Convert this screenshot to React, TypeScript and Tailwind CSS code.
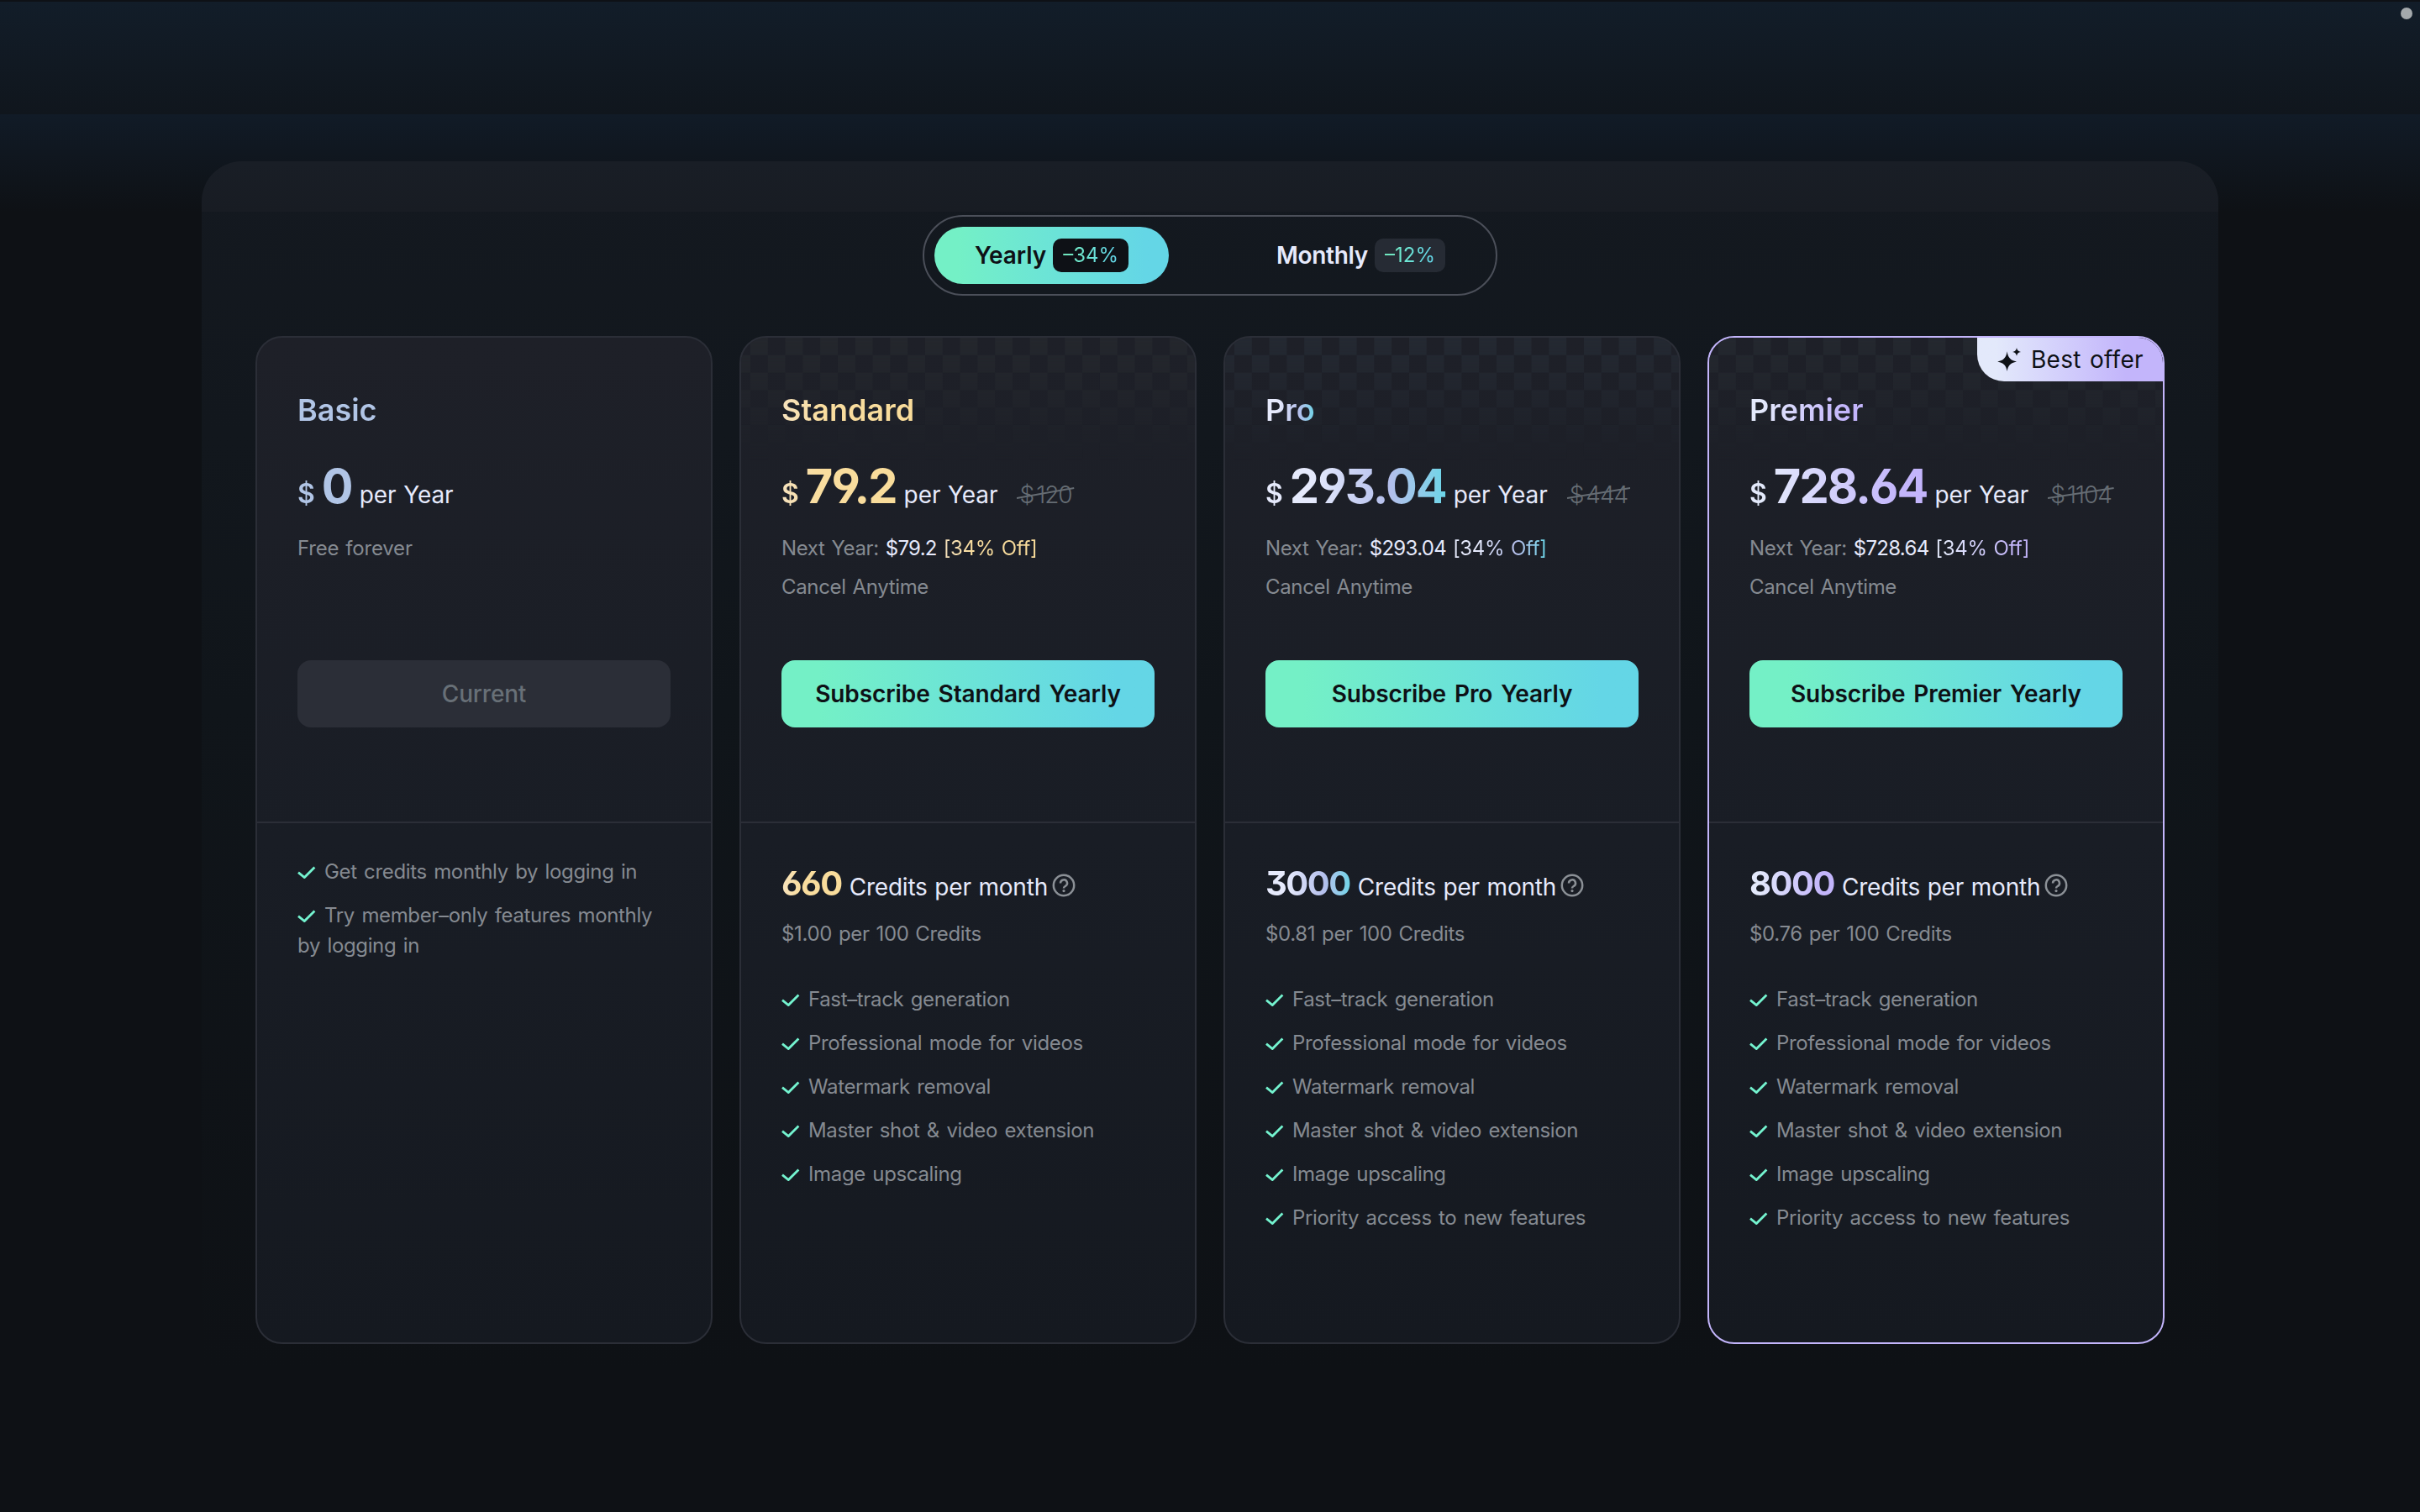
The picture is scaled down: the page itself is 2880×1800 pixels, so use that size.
import { clsx } from "clsx";

interface Plan {
  name: string;
  price: string;
  oldPrice?: string;
  gradient: string;
  pattern?: string;
  credits?: string;
  unitPrice?: string;
  features: string[];
  best?: boolean;
}

const PLANS: Plan[] = [
  {
    name: "Basic",
    price: "0",
    gradient: "from-[#b1c5e6] to-[#b1c5e6]",
    features: ["Get credits monthly by logging in", "Try member–only features monthly by logging in"],
  },
  {
    name: "Standard",
    price: "79.2",
    oldPrice: "120",
    gradient: "from-[#f6e2bd] via-[#f9dd9f] via-30% to-[#f9dc9a]",
    pattern: "text-[#24272d]",
    credits: "660",
    unitPrice: "$1.00",
    features: [
      "Fast–track generation",
      "Professional mode for videos",
      "Watermark removal",
      "Master shot & video extension",
      "Image upscaling",
    ],
  },
  {
    name: "Pro",
    price: "293.04",
    oldPrice: "444",
    gradient: "from-[#e6eafc] from-25% via-[#b4bfec] via-68% to-[#66d6e8]",
    pattern: "text-[#242932]",
    credits: "3000",
    unitPrice: "$0.81",
    features: [
      "Fast–track generation",
      "Professional mode for videos",
      "Watermark removal",
      "Master shot & video extension",
      "Image upscaling",
      "Priority access to new features",
    ],
  },
  {
    name: "Premier",
    price: "728.64",
    oldPrice: "1104",
    gradient: "from-[#e3e9fb] from-10% to-[#c3b5fb] to-85%",
    pattern: "text-[#24282f]",
    credits: "8000",
    unitPrice: "$0.76",
    best: true,
    features: [
      "Fast–track generation",
      "Professional mode for videos",
      "Watermark removal",
      "Master shot & video extension",
      "Image upscaling",
      "Priority access to new features",
    ],
  },
];

const ACCENT = "bg-linear-to-r from-[#74f0c6] from-10% to-[#64d6e6] to-90%";

function CheckIcon() {
  return (
    <svg width="22" height="15" viewBox="0 0 22 15" fill="none" className="mr-2.5 inline-block align-baseline">
      <path d="M1 7.6 8.3 13.6 20.4 1.4" stroke="#74f3cf" strokeWidth="2.8" />
    </svg>
  );
}

function HelpIcon() {
  return (
    <svg width="28" height="28" viewBox="0 0 28 28" fill="none" className="mt-1 ml-[5px]" stroke="#8b9096" strokeWidth="2.5">
      <circle cx="14" cy="14" r="12.2" />
      <path d="M10 11.4a4 4 0 1 1 6 3.4c-1.3.8-2 1.3-2 2.4v.4" />
      <circle cx="14" cy="20.6" r="1.6" fill="#8b9096" stroke="none" />
    </svg>
  );
}

function SparkleIcon() {
  return (
    <svg width="28" height="28" viewBox="0 0 28 28" fill="#0e1116">
      <path d="M11.6 4.2c1.2 7.6 3.8 10.6 11.4 12.3-7.6 1.7-10.2 4.6-11.4 11.5C10.4 21.1 7.8 18.2.2 16.5 7.8 14.8 10.4 11.8 11.600 4.200Z" />
      <path d="M23 0c.6 3 1.7 4.3 5 4.900-3.300.6-4.400 1.900-5 4.900-.6-3-1.700-4.300-5-4.900 3.300-.6 4.400-1.900 5-4.900Z" />
    </svg>
  );
}

function BillingToggle() {
  return (
    <div className="relative mx-auto flex h-24 w-[684px] items-center justify-between rounded-full border-2 border-[#4b4f59] px-3 text-[28px] font-semibold tracking-[-0.3px]">
      <button
        className={clsx("flex h-[68px] w-[279px] items-center gap-2 rounded-full pl-12 tracking-[-0.1px] text-[#0e1116]", ACCENT)}
      >
        Yearly
        <span className="flex h-10 w-[90px] items-center justify-center rounded-[10px] bg-[#0e1116] text-2xl font-normal tracking-normal">
          <span className={clsx("bg-clip-text text-transparent", ACCENT)}>–34%</span>
        </span>
      </button>
      <button className="flex h-[68px] items-center gap-2 px-12 text-[#e6eafc]">
        Monthly
        <span className="flex h-10 w-[84px] items-center justify-center rounded-[10px] bg-[#262b34] text-2xl font-normal tracking-normal">
          <span className={clsx("bg-clip-text text-transparent", ACCENT)}>–12%</span>
        </span>
      </button>
    </div>
  );
}

function PlanCard({ plan }: { plan: Plan }) {
  const gradientText = clsx("bg-linear-to-r bg-clip-text text-transparent", plan.gradient);

  return (
    <div
      className={clsx(
        "relative h-[1200px] w-[544px] overflow-hidden rounded-[32px] border-2 bg-linear-to-b from-[#1e2028] via-[#191d25] via-50% to-[#151920]",
        plan.best ? "border-[#c3b5fb]" : "border-[#2b2e37]"
      )}
    >
      {plan.pattern && (
        <div
          className={clsx(
            "absolute inset-x-0 top-0 h-[146px] bg-[repeating-conic-gradient(currentColor_0_25%,transparent_0_50%)] bg-[length:41.6px_41.6px] bg-[position:-9.8px_0] mask-b-from-0% mask-b-to-100%",
            plan.pattern
          )}
        />
      )}
      {plan.best && (
        <div className="absolute top-0 right-0 flex h-[52px] w-[221px] items-center gap-3 rounded-bl-[32px] bg-linear-to-r from-[#e3e9fb] from-10% to-[#c3b5fb] to-80% pl-6 text-[28px] tracking-[0.3px] text-[#0e1116] [word-spacing:2px]">
          <SparkleIcon />
          Best offer
        </div>
      )}

      <div className="relative h-[578px] border-b-2 border-[#2b2e37] px-12 pt-16">
        <h2 className="text-[36px] leading-[44px] font-semibold">
          <span className={gradientText}>{plan.name}</span>
        </h2>
        <div className="mt-[34px] flex h-[68px] items-baseline whitespace-nowrap">
          <div className={clsx("flex items-baseline gap-2", gradientText)}>
            <span className="text-[32px] font-semibold">$</span>
            <span className="pr-0.5 text-[56px] leading-[70px] font-bold tracking-[-1.9px] [font-feature-settings:'cv03','cv04','cv09']">
              {plan.price}
            </span>
          </div>
          <span className="ml-[7px] text-[28px] tracking-[-0.1px] text-[#e6eafc] [word-spacing:1px]">per Year</span>
          {plan.oldPrice && (
            <span className="relative ml-[26px] text-[28px] font-light tracking-[-1px] text-[#656c73]">
              <span className="mr-[3px]">$</span>
              {plan.oldPrice}
              <svg
                className="absolute top-[12px] -left-[3px] h-3.5 w-[calc(100%+6px)]"
                viewBox="0 0 70 14"
                preserveAspectRatio="none"
                stroke="#656c73"
                strokeWidth="2"
              >
                <path d="M0 13 70 1" />
              </svg>
            </span>
          )}
        </div>
        <div className="mt-[23px] flex h-[82px] flex-col justify-between text-2xl leading-[36px] tracking-[-0.35px] text-[#858a91] [word-spacing:1.5px]">
          {plan.oldPrice ? (
            <>
              <p>
                Next Year: <span className="tracking-[-0.7px] text-[#e6eafc]">${plan.price}</span>{" "}
                <span className={gradientText}>[34% Off]</span>
              </p>
              <p>Cancel Anytime</p>
            </>
          ) : (
            <p className="tracking-[-0.2px]">Free forever</p>
          )}
        </div>
        <button
          className={clsx(
            "mt-[69px] h-20 w-full rounded-2xl text-[28px]",
            plan.oldPrice
              ? clsx("font-semibold tracking-[-0.1px] text-[#0e1116] [word-spacing:3px]", ACCENT)
              : "bg-[#2b2e37] font-medium tracking-[-0.2px] text-[#687077]"
          )}
        >
          {plan.oldPrice ? `Subscribe ${plan.name} Yearly` : "Current"}
        </button>
      </div>

      <div className={clsx("relative px-12", plan.credits ? "pt-12" : "pt-10")}>
        {plan.credits && (
          <>
            <div className="flex h-12 items-center">
              <div className="flex items-baseline">
                <span
                  className={clsx(
                    "pr-0.5 text-[40px] leading-[48px] font-bold tracking-[-1.5px] [font-feature-settings:'cv03','cv04','cv09']",
                    gradientText
                  )}
                >
                  {plan.credits}
                </span>
                <span className="ml-[7px] text-[28px] tracking-[-0.2px] text-[#e6eafc] [word-spacing:1px]">
                  Credits per month
                </span>
              </div>
              <HelpIcon />
            </div>
            <p className="mt-[18px] mb-[42px] text-2xl leading-[36px] tracking-[-0.35px] text-[#858a91] [word-spacing:1.5px]">
              {plan.unitPrice} per 100 Credits
            </p>
          </>
        )}
        <ul className="flex flex-col gap-4 text-2xl leading-[36px] tracking-[-0.35px] text-[#858a91] [word-spacing:2px]">
          {plan.features.map((feature) => (
            <li key={feature}>
              <CheckIcon />
              {feature}
            </li>
          ))}
        </ul>
      </div>
    </div>
  );
}

export default function App() {
  return (
    <div className="relative h-[1800px] w-[2880px] overflow-hidden bg-[#0e1115] pt-48 font-['Inter',sans-serif]">
      {/* page header glow */}
      <div className="absolute inset-x-0 top-0 h-[252px]">
        <div className="h-[136px] border-t-2 border-[#0e1116] bg-linear-to-b from-[#121d29] to-[#10161d]" />
        <div className="h-[116px] bg-linear-to-b from-[#111b27] to-[#0e1115]" />
      </div>
      <div className="absolute top-[9px] right-[9px] size-3.5 rounded-full bg-[#a4a9ac]" />

      <main className="relative mx-auto h-[1440px] w-[2400px] overflow-hidden rounded-t-[48px] bg-linear-to-b from-[#141920] via-[#10151a] via-45% to-[#0e1115] px-16 pt-16">
        <div className="absolute inset-x-0 top-0 h-[60px] bg-linear-to-b from-[#191e26] to-[#181c23]" />
        <BillingToggle />
        <div className="mt-12 flex gap-8">
          {PLANS.map((plan) => (
            <PlanCard key={plan.name} plan={plan} />
          ))}
        </div>
      </main>
    </div>
  );
}
